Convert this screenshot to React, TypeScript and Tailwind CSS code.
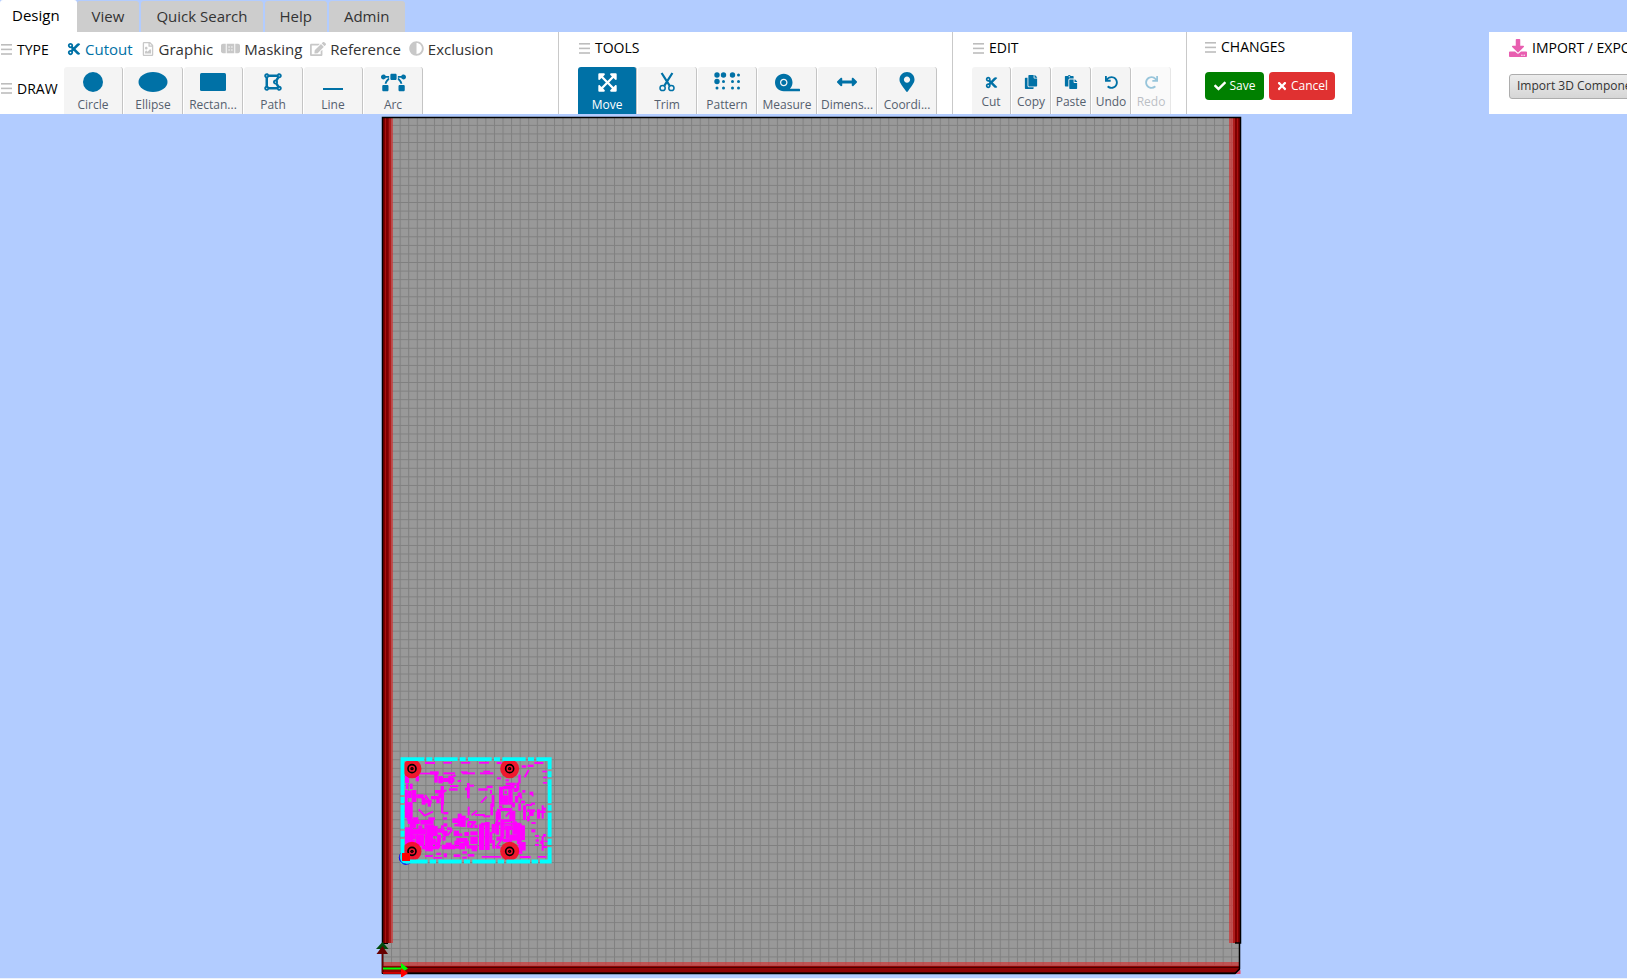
import type { ReactNode } from "react";
import {
  FaAdjust,
  FaArrowsAltH,
  FaBandAid,
  FaBezierCurve,
  FaCheck,
  FaCopy,
  FaCut,
  FaDownload,
  FaDrawPolygon,
  FaEdit,
  FaExpandArrowsAlt,
  FaMapMarkerAlt,
  FaPaste,
  FaRedo,
  FaRegFileImage,
  FaTape,
  FaTimes,
  FaUndo,
} from "react-icons/fa";
import { clsx } from "clsx";

const tabs = ["Design", "View", "Quick Search", "Help", "Admin"];

const types = [
  { label: "Cutout", icon: <FaCut size={14} />, active: true },
  { label: "Graphic", icon: <FaRegFileImage size={14} /> },
  { label: "Masking", icon: <FaBandAid size={19} /> },
  { label: "Reference", icon: <FaEdit size={16} /> },
  { label: "Exclusion", icon: <FaAdjust size={15} /> },
];

const drawTools = [
  { label: "Circle", icon: <svg width="20" height="20"><circle cx="10" cy="10" r="10" fill="currentColor" /></svg> },
  { label: "Ellipse", icon: <svg width="30" height="20"><ellipse cx="15" cy="10" rx="14.5" ry="10" fill="currentColor" /></svg> },
  { label: "Rectan...", icon: <svg width="26" height="20"><rect y="1" width="26" height="18" rx="1.5" fill="currentColor" /></svg> },
  { label: "Path", icon: <FaDrawPolygon size={20} /> },
  { label: "Line", icon: <svg width="20" height="20"><rect y="16" width="20" height="2" fill="currentColor" /></svg> },
  { label: "Arc", icon: <FaBezierCurve size={25} /> },
];

const editTools = [
  { label: "Cut", icon: <FaCut size={13} /> },
  { label: "Copy", icon: <FaCopy size={14} /> },
  { label: "Paste", icon: <FaPaste size={14} /> },
  { label: "Undo", icon: <FaUndo size={13} /> },
  { label: "Redo", icon: <FaRedo size={13} />, disabled: true },
];

function TrimIcon() {
  return (
    <svg width="16" height="20" viewBox="0 0 16 20" fill="none" stroke="currentColor">
      <path d="M2.6 1 10.6 13.6M13.4 1 5.4 13.6" strokeWidth="2.2" />
      <circle cx="3.6" cy="16" r="2.6" strokeWidth="1.5" />
      <circle cx="12.4" cy="16" r="2.6" strokeWidth="1.5" />
    </svg>
  );
}

function PatternIcon() {
  const big = [[3, 3], [9.5, 3], [18.5, 3], [3, 9.5]];
  const small = [[24.5, 3], [9.5, 9.5], [18.5, 9.5], [24.5, 9.5], [3, 16], [9.5, 16], [18.5, 16], [24.5, 16]];
  return (
    <svg width="26" height="20" fill="currentColor">
      {big.map(([x, y]) => <circle key={`${x}-${y}`} cx={x} cy={y} r="2.7" />)}
      {small.map(([x, y]) => <circle key={`${x}-${y}`} cx={x} cy={y} r="1.5" />)}
    </svg>
  );
}

const tools = [
  { label: "Move", icon: <FaExpandArrowsAlt size={21} />, active: true },
  { label: "Trim", icon: <TrimIcon /> },
  { label: "Pattern", icon: <PatternIcon /> },
  { label: "Measure", icon: <FaTape size={25} /> },
  { label: "Dimens...", icon: <FaArrowsAltH size={20} /> },
  { label: "Coordi...", icon: <FaMapMarkerAlt size={20} /> },
];

function Grip() {
  return (
    <svg width="11" height="11" className="shrink-0 text-[#bdbdbd]" fill="currentColor">
      <rect y="0" width="11" height="1.6" />
      <rect y="4.6" width="11" height="1.6" />
      <rect y="9.2" width="11" height="1.6" />
    </svg>
  );
}

function GroupTitle({ children }: { children: ReactNode }) {
  return (
    <h2 className="flex items-center gap-[5px] whitespace-nowrap text-sm leading-5 text-black">
      <Grip />
      {children}
    </h2>
  );
}

interface ToolButtonProps {
  label: string;
  icon: ReactNode;
  active?: boolean;
  disabled?: boolean;
  small?: boolean;
}

function ToolButton({ label, icon, active, disabled, small }: ToolButtonProps) {
  return (
    <button
      type="button"
      disabled={disabled}
      className={clsx(
        "mr-px flex h-[47px] shrink-0 flex-col items-center rounded-t-[3px] border-r border-[#c4c4c4] text-xs leading-4",
        small ? "w-[39px]" : "w-[59px]",
        active ? "bg-[#0071a6] text-white" : "bg-[#f4f4f4] text-[#0071a6]",
        disabled && "opacity-40"
      )}
    >
      <span className={clsx("flex items-center justify-center", small ? "mt-1 h-[22px]" : "mt-[5px] h-5")}>
        {icon}
      </span>
      <span className={clsx(!active && "text-[#55606e]", small ? "mt-px" : "mt-[5px]")}>{label}</span>
    </button>
  );
}

function Ribbon() {
  return (
    <div className="flex h-[82px] overflow-hidden">
      <section className="flex w-[559px] shrink-0 flex-col border-r border-[#c9c9c9] bg-white">
        <div className="flex h-[35px] items-center">
          <div className="w-[67px] pl-px">
            <GroupTitle>TYPE</GroupTitle>
          </div>
          <div className="flex items-center gap-2 pb-0.5">
            {types.map((t) => (
              <button
                key={t.label}
                type="button"
                className={clsx(
                  "flex items-center gap-1 text-[15px] leading-5",
                  t.active ? "text-[#0071a6]" : "text-[#333]"
                )}
              >
                <span className={t.active ? "" : "text-[#c8c8c8]"}>{t.icon}</span>
                {t.label}
              </button>
            ))}
          </div>
        </div>
        <div className="flex items-center">
          <div className="w-16 pb-1 pl-px">
            <GroupTitle>DRAW</GroupTitle>
          </div>
          {drawTools.map((t) => <ToolButton key={t.label} {...t} />)}
        </div>
      </section>

      <section className="flex w-[394px] shrink-0 flex-col border-r border-[#c9c9c9] bg-white pl-[18px]">
        <div className="h-[35px] pt-1.5 pl-0.5">
          <GroupTitle>TOOLS</GroupTitle>
        </div>
        <div className="flex pl-px">
          {tools.map((t) => <ToolButton key={t.label} {...t} />)}
        </div>
      </section>

      <section className="flex w-[234px] shrink-0 flex-col border-r border-[#c9c9c9] bg-white pl-[18px]">
        <div className="h-[35px] pt-1.5 pl-0.5">
          <GroupTitle>EDIT</GroupTitle>
        </div>
        <div className="flex pl-px">
          {editTools.map((t) => <ToolButton key={t.label} {...t} small />)}
        </div>
      </section>

      <section className="flex w-[165px] shrink-0 flex-col bg-white pl-[18px]">
        <div className="h-10 pt-[5px]">
          <GroupTitle>CHANGES</GroupTitle>
        </div>
        <div className="flex gap-[5px]">
          <button type="button" className="flex h-7 w-[59px] items-center justify-center gap-1 rounded bg-[#008000] text-xs text-white">
            <FaCheck size={12} />
            Save
          </button>
          <button type="button" className="flex h-7 w-[66px] items-center justify-center gap-[3px] rounded bg-[#e03131] text-xs text-white">
            <FaTimes size={12} />
            Cancel
          </button>
        </div>
      </section>

      <section className="ml-[137px] min-w-0 flex-1 overflow-hidden bg-white pl-5">
        <h2 className="flex h-10 items-center gap-[5px] pb-2 text-sm whitespace-nowrap text-black">
          <FaDownload size={18} className="shrink-0 text-[#e85eb0]" />
          IMPORT / EXPORT
        </h2>
        <button
          type="button"
          className="h-[25px] rounded-[3px] border border-[#adadad] bg-linear-to-b from-[#ececec] to-[#d6d6d6] px-[7px] text-xs whitespace-nowrap text-[#333]"
        >
          Import 3D Component
        </button>
      </section>
    </div>
  );
}

// Copper areas of the placed component, as x, y, width, height in thirds of a board unit.
const copper = [
  [150, 66, 30, 6], [205, 66, 25, 5], [258, 66, 28, 5], [312, 66, 30, 5], [365, 66, 15, 6], [478, 66, 27, 6],
  [135, 98, 30, 5], [165, 94, 26, 10], [205, 97, 35, 6], [262, 97, 38, 6], [315, 97, 40, 6], [258, 94, 20, 5], [325, 92, 20, 5],
  [90, 105, 12, 24], [93, 131, 7, 16], [105, 131, 8, 16], [122, 108, 10, 16], [178, 102, 10, 26], [190, 108, 14, 22], [204, 114, 34, 12], [220, 107, 14, 24], [248, 120, 10, 6],
  [90, 150, 8, 84], [98, 152, 12, 22], [110, 150, 14, 36], [95, 186, 18, 56], [124, 163, 22, 12], [140, 172, 12, 22], [150, 180, 20, 10], [158, 188, 10, 12],
  [168, 168, 22, 10], [180, 150, 26, 10], [190, 160, 14, 14], [197, 138, 10, 56], [184, 172, 10, 18], [225, 135, 25, 6], [222, 145, 26, 7],
  [276, 129, 8, 46], [270, 143, 15, 8], [285, 134, 12, 6], [310, 145, 28, 7], [335, 137, 18, 7], [345, 150, 6, 12],
  [350, 165, 8, 36], [346, 190, 8, 36], [198, 190, 7, 30], [205, 216, 15, 7], [278, 200, 6, 26], [300, 222, 30, 6], [325, 226, 20, 6],
  [98, 240, 36, 12], [114, 232, 16, 10], [136, 240, 40, 14], [160, 232, 20, 8], [104, 252, 20, 12], [130, 256, 12, 12], [148, 254, 30, 12],
  [90, 262, 24, 48], [114, 266, 40, 18], [122, 284, 26, 34], [154, 264, 20, 52], [174, 258, 14, 30], [188, 266, 20, 12], [186, 284, 12, 22], [198, 256, 8, 16], [206, 272, 12, 16], [202, 290, 10, 12],
  [114, 284, 8, 14], [150, 284, 12, 28], [170, 296, 14, 18], [90, 300, 30, 14], [140, 318, 52, 10], [150, 312, 24, 22], [180, 306, 16, 18],
  [205, 250, 12, 10], [204, 232, 12, 7], [216, 262, 14, 8], [232, 235, 30, 14], [248, 221, 12, 38], [258, 227, 14, 34], [238, 252, 20, 7], [272, 234, 10, 7],
  [278, 243, 26, 6], [276, 248, 8, 15], [288, 250, 7, 14], [298, 254, 10, 10],
  [236, 272, 16, 16], [252, 280, 10, 8], [268, 276, 14, 12], [286, 274, 22, 12], [244, 294, 34, 12], [238, 302, 16, 14], [266, 302, 16, 16], [286, 290, 22, 22], [252, 308, 18, 20],
  [200, 314, 40, 14], [212, 308, 18, 8], [232, 318, 22, 8], [274, 316, 34, 10], [290, 322, 16, 12], [206, 340, 10, 12], [262, 334, 14, 7],
  [312, 252, 16, 78], [330, 246, 14, 84], [318, 248, 22, 8], [350, 252, 12, 28], [344, 276, 8, 34], [362, 248, 10, 36], [352, 300, 8, 26],
  [150, 345, 24, 6], [175, 351, 26, 5], [184, 338, 14, 7], [236, 343, 20, 8], [278, 342, 20, 8], [262, 350, 14, 6], [320, 348, 58, 5], [435, 348, 32, 6], [488, 348, 26, 5],
  [372, 140, 12, 54], [384, 138, 28, 10], [400, 148, 13, 46], [384, 166, 16, 28], [388, 152, 8, 10], [392, 128, 30, 8], [406, 134, 12, 12], [366, 112, 12, 6], [392, 118, 10, 6],
  [366, 206, 12, 34], [378, 204, 34, 9], [403, 212, 18, 32], [376, 238, 32, 8], [362, 214, 8, 38], [372, 196, 10, 8], [410, 188, 10, 14],
  [360, 246, 16, 10], [376, 246, 12, 46], [388, 256, 24, 14], [412, 244, 14, 40], [392, 270, 12, 26], [404, 284, 22, 18], [426, 250, 14, 62], [438, 256, 12, 44], [364, 290, 20, 12], [430, 310, 12, 32], [440, 306, 12, 26], [384, 296, 26, 10], [362, 318, 14, 8], [384, 248, 50, 6],
  [430, 104, 7, 26], [424, 128, 9, 24], [416, 144, 12, 12], [428, 158, 12, 14], [420, 168, 10, 20], [440, 76, 14, 7], [458, 74, 18, 7], [442, 150, 9, 8],
  [464, 155, 11, 10], [470, 165, 6, 4], [430, 190, 8, 22], [438, 182, 12, 8], [444, 196, 9, 44], [453, 192, 18, 6], [456, 208, 24, 8], [462, 214, 14, 14], [456, 228, 8, 16], [468, 188, 12, 6], [486, 208, 9, 28], [500, 196, 6, 40], [492, 212, 20, 7], [504, 203, 9, 6],
  [469, 246, 13, 6], [469, 268, 12, 9], [480, 285, 12, 6], [482, 298, 10, 7], [480, 312, 12, 6], [500, 288, 6, 44], [504, 282, 9, 8], [504, 318, 12, 6], [508, 302, 10, 4], [496, 302, 6, 10],
  [502, 92, 14, 5], [504, 110, 12, 5], [504, 126, 12, 5],
];

const cornerPads = [[111, 86], [404, 86], [111, 334], [404, 334]];

function Component() {
  return (
    <g transform="translate(-7 623) scale(.3333)">
      <circle cx="94" cy="352" r="21" fill="none" stroke="#00f" strokeWidth="2.5" />
      <g fill="#f0f">
        {copper.map(([x, y, w, h], i) => <rect key={i} x={x} y={y} width={w} height={h} />)}
      </g>
      <path
        d="M318 188 335 170M131 208 150 228M150 226 174 215M290 226 306 212M449 112 461 90M150 165 168 190M366 318 384 292M392 230 404 216M432 158 440 176M284 262 302 246M196 268 212 290M226 112 242 106M200 160 214 150M218 286 232 268"
        stroke="#f0f"
        strokeWidth="6"
        fill="none"
      />
      <g fill="#fa0a24" fillOpacity=".9">
        {cornerPads.map(([x, y]) => <circle key={`${x}-${y}`} cx={x} cy={y} r="28.5" />)}
      </g>
      <path
        d="M77 57.5H148M154 57.5H172M178 57.5H248M254 57.5H272M279 57.5H350M357 57.5H375M382 57.5H452M459 57.5H477M484 57.5H530M77 364.5H158M164 364.5H183M190 364.5H260M267 364.5H285M292 364.5H362M368 364.5H387M394 364.5H465M470 364.5H489M495 364.5H530M82.5 52V165M82.5 171V189M82.5 195V266M82.5 272V290M82.5 297V370M524 52V88M524 94V112M524 118V190M524 195V212M524 218V290M524 296V315M524 322V370"
        stroke="#0ff"
        strokeWidth="11.5"
        fill="none"
      />
      {cornerPads.map(([x, y]) => (
        <g key={`${x}-${y}`}>
          <circle cx={x} cy={y} r="12" fill="none" stroke="#000" strokeWidth="5" />
          <circle cx={x} cy={y} r="5" />
          <circle cx={x} cy={y} r="1.5" fill="#a00" />
        </g>
      ))}
      <path d="M73 352A21 21 0 0 0 94 373" fill="none" stroke="#00f" strokeWidth="2.5" />
      <rect x="81" y="339" width="24" height="24" fill="red" />
    </g>
  );
}

function Board() {
  return (
    <svg
      role="img"
      aria-label="Panel"
      width="870"
      height="863"
      viewBox="-6 -3 870 863"
      className="shrink-0"
    >
      <defs>
        <pattern id="grid" x=".5" y="-.7" width="8.573" height="8.573" patternUnits="userSpaceOnUse">
          <path d="M0 .5H8.573M.5 0V8.573" stroke="#808080" strokeWidth="1" />
        </pattern>
      </defs>
      <path d="M0 0H859V826H857.5V852L853 857H0Z" fill="#999" />
      <path d="M0 0H859V826H857.5V852L853 857H0Z" fill="url(#grid)" />

      {/* left flange */}
      <rect x="1" y="1" width="5" height="825" fill="#7d0000" />
      <rect x="3" y="1" width="1" height="825" fill="#a80f0f" />
      <rect x="6" y="1" width="3" height="825" fill="#b01c1c" />
      <rect x="9" y="1" width="2" height="825" fill="#d62c2c" fillOpacity=".65" />
      <rect x="6" y="1" width="1" height="825" fill="#8c0808" />

      {/* right flange */}
      <rect x="847" y="1" width="4" height="825" fill="#d62c2c" fillOpacity=".65" />
      <rect x="851" y="1" width="3" height="825" fill="#b01c1c" />
      <rect x="853" y="1" width="6" height="825" fill="#7d0000" />
      <rect x="855" y="1" width="1" height="825" fill="#a80f0f" />

      {/* bottom flange */}
      <rect x="1" y="845" width="857" height="5" fill="#d62c2c" fillOpacity=".65" />
      <path d="M1 849H858V853L854 857H1Z" fill="#8f0303" />
      <path d="M1 850.5H858M1 855.5H855" stroke="#4a0000" />
      <path d="M858.5 853V857H854Z" fill="#e64a6a" />

      <path
        d="M.5 857V.5H858.5V826H853M857.5 826V852L853 856.5H1"
        fill="none"
        stroke="#000"
        strokeWidth="1.5"
      />
      <path d="M1 826.5H6" stroke="#000" />

      <Component />

      {/* axes */}
      <path d="M.5 836V856" stroke="#600" strokeWidth="1.5" />
      <path d="M.5 825-6 832H6.5Z" fill="#004d0d" />
      <path d="M.5 829-5.5 837H6Z" fill="#600" />
      <path d="M1 851.5H20" stroke="#0f0" strokeWidth="2" />
      <path d="M19 846 26 851.5 19 856Z" fill="#0f0" />
      <path d="M1 856H20" stroke="red" strokeWidth="1.5" />
      <path d="M19 851 26 856 19 861Z" fill="red" />
    </svg>
  );
}

export default function App() {
  return (
    <div className="flex min-h-screen flex-col overflow-hidden border-b border-[#eef2fb] bg-[#b2ccff] font-['Open_Sans',sans-serif]">
      <nav className="flex h-8 items-end gap-0.5">
        {tabs.map((tab, i) => (
          <button
            key={tab}
            type="button"
            className={clsx(
              "rounded-t-[3px] text-[15px]",
              i === 0 ? "-mr-0.5 h-8 bg-white pr-[17px] pb-0.5 pl-3 text-black" : "h-[31px] bg-[#cdcdcd] px-[15px] text-[#333]"
            )}
          >
            {tab}
          </button>
        ))}
      </nav>
      <Ribbon />
      <main className="flex justify-center pr-[5px]">
        <Board />
      </main>
    </div>
  );
}
